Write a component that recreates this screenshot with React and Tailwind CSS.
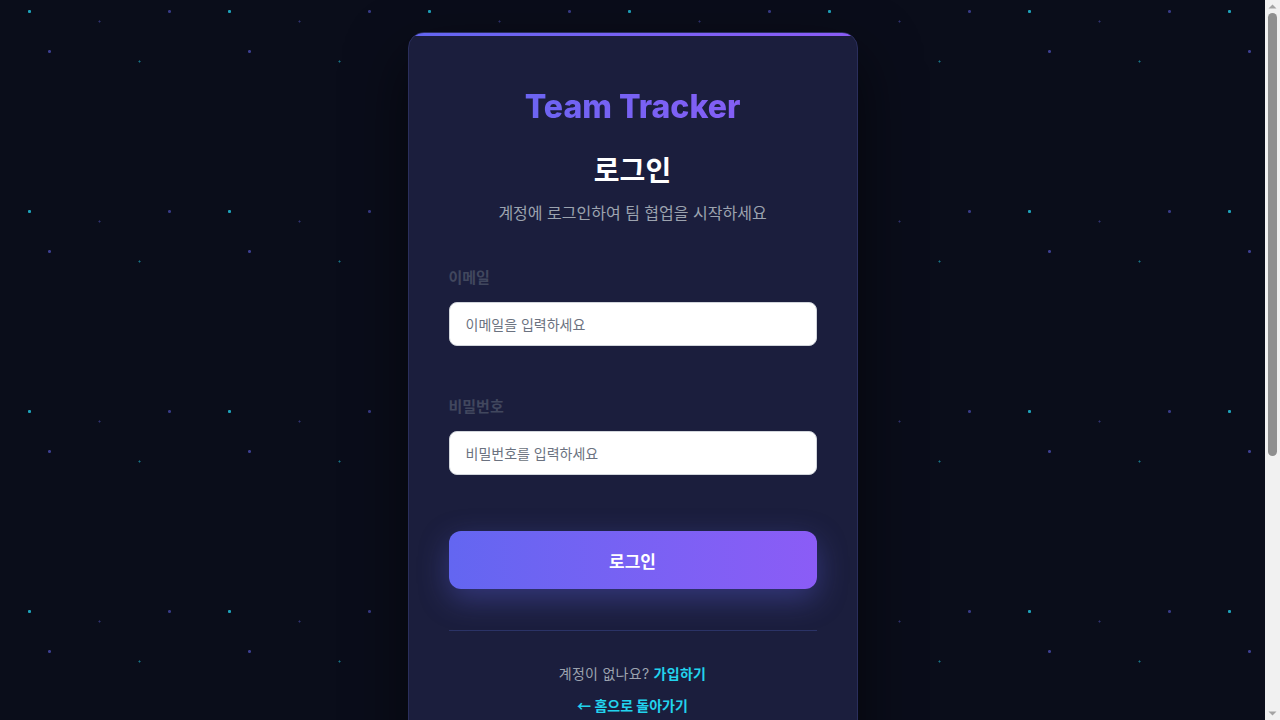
import React from "react";

function FakeScrollbar() {
  return (
    <div className="fixed right-0 top-0 flex h-screen w-[15px] flex-col items-center bg-[#f1f1f1]">
      <svg width="15" height="13" viewBox="0 0 15 13" className="shrink-0">
        <path d="M3.5 8.5 L7.5 4.5 L11.5 8.5 Z" fill="#a3a3a3" />
      </svg>
      <div className="h-[443px] w-[9px] shrink-0 rounded-full bg-[#8f8f8f]" />
      <div className="flex-1" />
      <svg width="15" height="13" viewBox="0 0 15 13" className="shrink-0">
        <path d="M3.5 4.5 L7.5 8.5 L11.5 4.5 Z" fill="#a3a3a3" />
      </svg>
    </div>
  );
}

export default function App() {
  return (
    <div
      className="min-h-[1120px] w-full bg-[#0a0d1a] bg-[radial-gradient(circle_at_29.5px_11.5px,rgba(34,211,238,0.75)_0,rgba(34,211,238,0.75)_1.2px,transparent_2px),radial-gradient(circle_at_169.5px_11.5px,rgba(99,102,241,0.5)_0,rgba(99,102,241,0.5)_1.1px,transparent_1.9px),radial-gradient(circle_at_99.5px_21.5px,rgba(99,102,241,0.4)_0,rgba(99,102,241,0.4)_0.7px,transparent_1.4px),radial-gradient(circle_at_49.5px_51.5px,rgba(99,102,241,0.55)_0,rgba(99,102,241,0.55)_1.1px,transparent_1.9px),radial-gradient(circle_at_139.5px_61.5px,rgba(34,211,238,0.5)_0,rgba(34,211,238,0.5)_0.7px,transparent_1.4px)] bg-[length:200px_200px] pt-8 pb-10"
      style={{ fontFamily: 'Inter, "Noto Sans CJK KR", sans-serif' }}
    >
      <div className="mr-[15px]">
        <div className="relative mx-auto w-[450px] overflow-hidden rounded-2xl border border-[#2a2e5c] bg-[#1b1e3d] px-10 pt-[53px] pb-10 shadow-[0_25px_60px_rgba(0,0,0,0.6)]">
          <div className="absolute left-0 right-0 top-0 h-[3px] bg-gradient-to-r from-[#6366f1] to-[#8b5cf6]" />

          <div className="text-center">
            <div className="mt-px bg-gradient-to-r from-[#6366f1] to-[#8b5cf6] bg-clip-text text-[32px] font-extrabold leading-[40px] text-transparent">
              Team Tracker
            </div>
            <h1 className="mt-[26px] text-[28px] font-bold leading-[36px] text-white">
              로그인
            </h1>
            <p className="mt-[12px] text-[16px] leading-[24px] text-[#9ca3af]">
              계정에 로그인하여 팀 협업을 시작하세요
            </p>
          </div>

          <form className="mt-[42px]" onSubmit={(e) => e.preventDefault()}>
            <label className="block text-[15px] font-semibold leading-[22px] text-[#41475e]">
              이메일
            </label>
            <input
              type="email"
              placeholder="이메일을 입력하세요"
              className="mt-[13px] block h-[44px] w-full rounded-lg border border-[#d1d5db] bg-white px-4 text-[14px] text-[#111827] placeholder:text-[#6b7280] outline-none"
              style={{ fontFamily: 'Inter, "Noto Sans CJK KR", sans-serif' }}
            />

            <label className="mt-[50px] block text-[15px] font-semibold leading-[22px] text-[#41475e]">
              비밀번호
            </label>
            <input
              type="password"
              placeholder="비밀번호를 입력하세요"
              className="mt-[13px] block h-[44px] w-full rounded-lg border border-[#d1d5db] bg-white px-4 text-[14px] text-[#111827] placeholder:text-[#6b7280] outline-none"
              style={{ fontFamily: 'Inter, "Noto Sans CJK KR", sans-serif' }}
            />

            <button
              type="submit"
              className="mt-14 flex h-[58px] w-full items-center justify-center rounded-xl bg-gradient-to-r from-[#6366f1] to-[#8b5cf6] pt-[6px] text-[17px] font-bold text-white shadow-[0_10px_30px_rgba(99,102,241,0.35)]"
            >
              로그인
            </button>
          </form>

          <div className="mt-[41px] h-px w-full bg-[#2b3366]" />

          <p className="mt-[33px] text-center text-[14px] leading-[20px] tracking-[0.02em] text-[#9ca3af]">
            계정이 없나요?{" "}
            <a href="#" className="font-bold text-[#22d3ee]">
              가입하기
            </a>
          </p>
          <p className="mt-[11px] text-center text-[14px] font-bold leading-[20px]">
            <a href="#" className="text-[#22d3ee]">
              <span style={{ fontFamily: '"Noto Sans CJK KR", sans-serif' }}>←</span> 홈으로 돌아가기
            </a>
          </p>
        </div>
      </div>
      <FakeScrollbar />
    </div>
  );
}
